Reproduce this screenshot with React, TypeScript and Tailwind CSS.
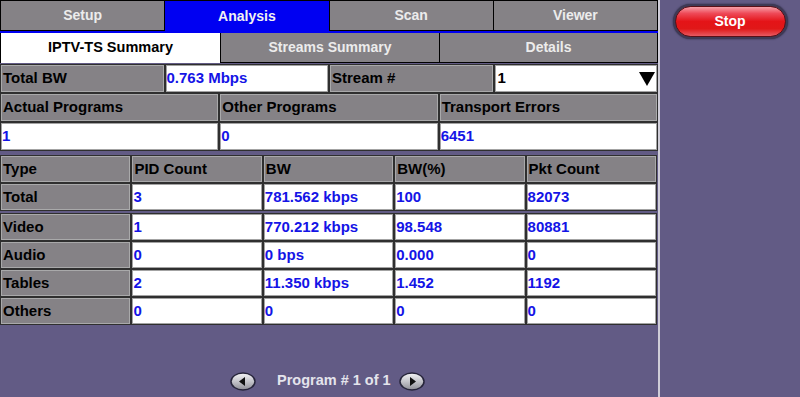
import React from 'react';

const font = "font-['Liberation_Sans',Arial,sans-serif] font-bold";

type CellProps = {
  children?: React.ReactNode;
  kind: 'label' | 'value';
  tall?: boolean;
};

const Cell: React.FC<CellProps> = ({ children, kind, tall }) => {
  const h = tall ? 'h-[27px]' : 'h-[26px]';
  return (
    <div
      className={
        kind === 'label'
          ? `${h} bg-[#858286] border border-[#a9a9aa] flex items-center pl-[1px] text-[15px] text-black whitespace-nowrap overflow-hidden`
          : `${h} bg-white border border-[#a3a3a3] flex items-center text-[15px] text-[#1414e6] whitespace-nowrap overflow-hidden`
      }
    >
      {children}
    </div>
  );
};

const tableHead = ['Type', 'PID Count', 'BW', 'BW(%)', 'Pkt Count'];
const totalRow = ['Total', '3', '781.562 kbps', '100', '82073'];
const rows = [
  ['Video', '1', '770.212 kbps', '98.548', '80881'],
  ['Audio', '0', '0 bps', '0.000', '0'],
  ['Tables', '2', '11.350 kbps', '1.452', '1192'],
  ['Others', '0', '0', '0', '0'],
];

const ArrowButton: React.FC<{ dir: 'left' | 'right' }> = ({ dir }) => (
  <svg width="26" height="19" viewBox="0 0 26 19">
    <defs>
      <linearGradient id={`g-${dir}`} x1="0" y1="0" x2="0" y2="1">
        <stop offset="0" stopColor="#f4f4f6" />
        <stop offset="0.5" stopColor="#c4c4ca" />
        <stop offset="1" stopColor="#8e8e96" />
      </linearGradient>
    </defs>
    <ellipse cx="13" cy="9.5" rx="12" ry="8.5" fill={`url(#g-${dir})`} stroke="#26243a" strokeWidth="1.5" />
    {dir === 'left' ? (
      <polygon points="9,9.5 15,5 15,14" fill="#111" />
    ) : (
      <polygon points="17,9.5 11,5 11,14" fill="#111" />
    )}
  </svg>
);

export default function App() {
  return (
    <div className={`w-[800px] h-[397px] bg-[#625b85] flex overflow-hidden ${font}`}>
      {/* main area */}
      <div className="w-[658px] flex flex-col">
        {/* top tabs */}
        <div className="h-[31px] flex border-l border-t border-black">
          <div className="flex-1 bg-[#858286] border-r border-b border-black flex items-center justify-center text-[14px] text-[#ececec]">Setup</div>
          <div className="flex-1 bg-[#0000f2] border-r border-black flex items-center justify-center text-[14px] text-[#f2f2f2]">Analysis</div>
          <div className="flex-1 bg-[#858286] border-r border-b border-black flex items-center justify-center text-[14px] text-[#ececec]">Scan</div>
          <div className="flex-1 bg-[#858286] border-r border-b border-black flex items-center justify-center text-[14px] text-[#ececec]">Viewer</div>
        </div>
        <div className="h-[2px] bg-[#0000f2]" />
        {/* sub tabs */}
        <div className="h-[30px] flex border-l border-black">
          <div className="w-[220px] bg-white border-r border-black flex items-center justify-center text-[14.5px] text-black">IPTV-TS Summary</div>
          <div className="w-[219px] bg-[#858286] border-r border-b border-black flex items-center justify-center text-[14px] text-[#ececec]">Streams Summary</div>
          <div className="flex-1 bg-[#858286] border-r border-b border-black flex items-center justify-center text-[14px] text-[#ececec]">Details</div>
        </div>

        {/* summary block */}
        <div className="mt-[1px] w-[658px] bg-[#2f2f2f] p-[1px] flex flex-col gap-[2px]">
          <div className="grid grid-cols-4 gap-[2px]">
            <Cell kind="label" tall>Total BW</Cell>
            <Cell kind="value" tall>0.763 Mbps</Cell>
            <Cell kind="label" tall>Stream #</Cell>
            <div className="h-[27px] bg-white border border-[#a3a3a3] flex items-center justify-between pl-[2px] pr-[1px] text-[15px] text-black">
              <span>1</span>
              <svg width="16" height="15" viewBox="0 0 16 15">
                <polygon points="0,1 16,1 8,15" fill="#000" />
              </svg>
            </div>
          </div>
          <div className="grid grid-cols-3 gap-[2px]">
            <Cell kind="label" tall>Actual Programs</Cell>
            <Cell kind="label" tall>Other Programs</Cell>
            <Cell kind="label" tall>Transport Errors</Cell>
          </div>
          <div className="grid grid-cols-3 gap-[2px]">
            <Cell kind="value" tall>1</Cell>
            <Cell kind="value" tall>0</Cell>
            <Cell kind="value" tall>6451</Cell>
          </div>
        </div>

        {/* stream table */}
        <div className="mt-[4px] w-[657px] bg-[#2f2f2f] p-[1px] flex flex-col gap-[2px]">
          <div className="grid grid-cols-5 gap-[2px]">
            {tableHead.map((h) => (
              <Cell key={h} kind="label">{h}</Cell>
            ))}
          </div>
          <div className="grid grid-cols-5 gap-[2px]">
            {totalRow.map((v, i) => (
              <Cell key={i} kind={i === 0 ? 'label' : 'value'}>{v}</Cell>
            ))}
          </div>
        </div>
        <div className="mt-[2px] w-[657px] bg-[#2f2f2f] p-[1px] flex flex-col gap-[2px]">
          {rows.map((r) => (
            <div key={r[0]} className="grid grid-cols-5 gap-[2px]">
              {r.map((v, i) => (
                <Cell key={i} kind={i === 0 ? 'label' : 'value'}>{v}</Cell>
              ))}
            </div>
          ))}
        </div>

        {/* pager */}
        <div className="flex-1 flex items-end pl-[230px] pb-[5px]">
          <div className="flex items-center">
            <ArrowButton dir="left" />
            <span className="ml-[21px] mr-[8px] text-[14.5px] text-[#e4e4ec]">Program # 1 of 1</span>
            <ArrowButton dir="right" />
          </div>
        </div>
      </div>

      {/* right panel */}
      <div className="flex-1 border-l-2 border-[#cfcdd8] flex justify-center pt-[4px]">
        <div className="h-[35px] w-[115px] rounded-full bg-[#3e3a55] p-[2px] shadow-[0_0_2px_#2a2840]">
          <div className="h-full w-full rounded-full border border-[#5a1018] bg-[linear-gradient(to_bottom,#f7a0a8_0%,#ee4a58_22%,#e41418_50%,#e01818_75%,#e85a62_100%)] flex items-center justify-center text-[14px] text-white">
            Stop
          </div>
        </div>
      </div>
    </div>
  );
}
